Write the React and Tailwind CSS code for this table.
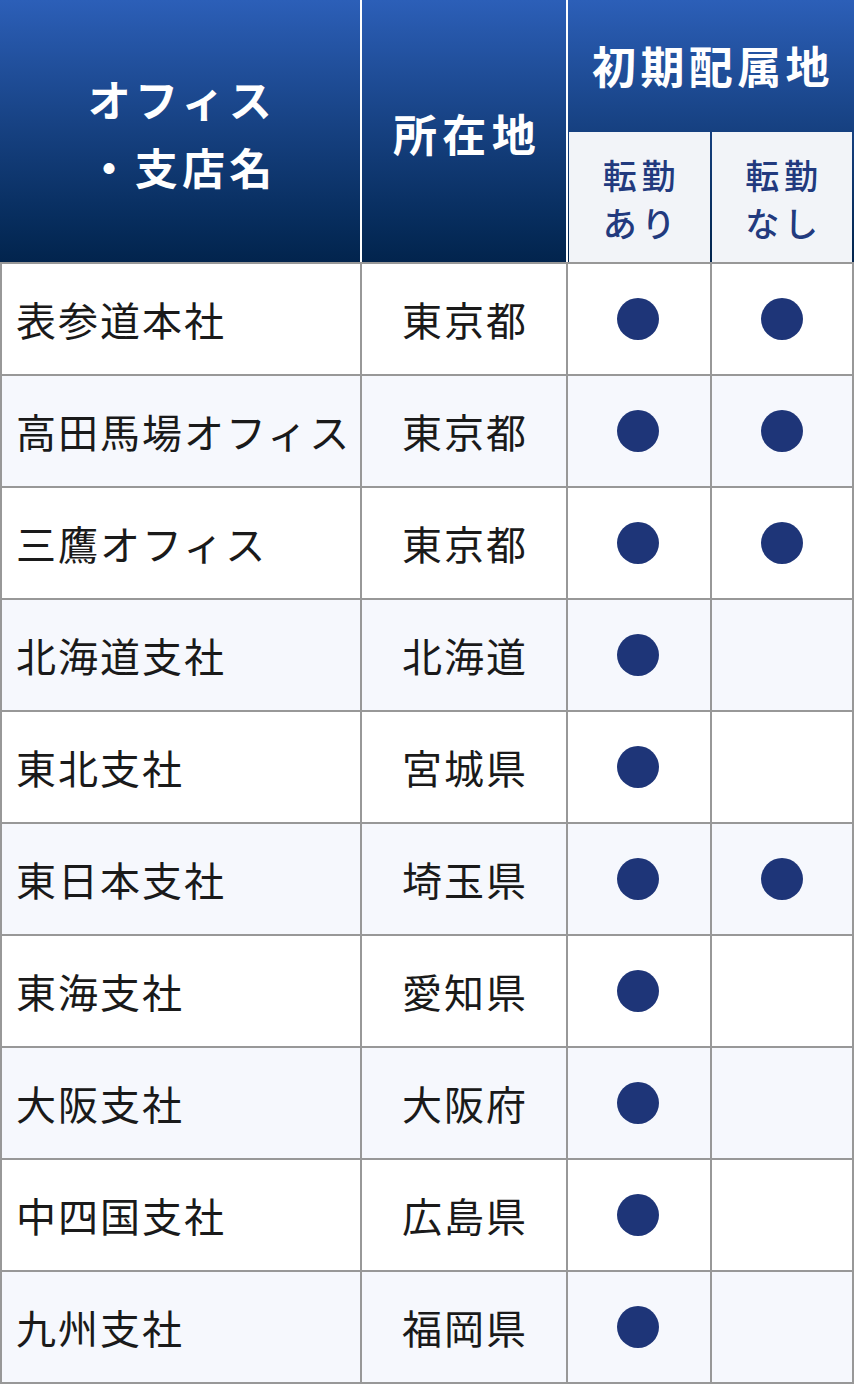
import React from "react";

const rows = [
  ["表参道本社", "東京都", true, true],
  ["高田馬場オフィス", "東京都", true, true],
  ["三鷹オフィス", "東京都", true, true],
  ["北海道支社", "北海道", true, false],
  ["東北支社", "宮城県", true, false],
  ["東日本支社", "埼玉県", true, true],
  ["東海支社", "愛知県", true, false],
  ["大阪支社", "大阪府", true, false],
  ["中四国支社", "広島県", true, false],
  ["九州支社", "福岡県", true, false],
];

const font = { fontFamily: '"Noto Sans CJK JP", "Noto Sans", sans-serif' };

function Dot() {
  return <div className="w-[42px] h-[42px] rounded-full bg-[#1e3578]" />;
}

export default function App() {
  return (
    <div className="w-[854px] bg-white" style={font}>
      {/* Header */}
      <div className="flex h-[262px] bg-gradient-to-b from-[#2c5fb8] to-[#02244d] text-white font-bold">
        <div className="w-[360px] flex items-center justify-center text-center text-[43px] leading-[68px] tracking-[0.1em] pl-[4px] pt-[2px]">
          <div>
            オフィス
            <br />
            ・支店名
          </div>
        </div>
        <div className="w-[206px] border-l-2 border-white flex items-center justify-center text-[44px] tracking-[0.12em] pt-[4px] pl-[6px]">
          所在地
        </div>
        <div className="flex-1 border-l-2 border-white flex flex-col">
          <div className="h-[132px] flex items-center justify-center text-[44px] tracking-[0.1em] pb-[2px] pl-[4px]">
            初期配属地
          </div>
          <div className="flex-1 flex pl-[1px]">
            <div className="w-[141px] bg-[#f2f4f8] flex items-center justify-center text-center text-[#223a7e] text-[34px] leading-[48px] tracking-[0.14em] font-medium pt-[4px] pl-[4px]">
              <div>
                転勤
                <br />
                あり
              </div>
            </div>
            <div className="w-[140px] ml-[2px] bg-[#f2f4f8] flex items-center justify-center text-center text-[#223a7e] text-[34px] leading-[48px] tracking-[0.14em] font-medium pt-[4px] pl-[4px]">
              <div>
                転勤
                <br />
                なし
              </div>
            </div>
          </div>
        </div>
      </div>
      {/* Body */}
      <div className="border-l-2 border-r-2 border-t-2 border-[#989898]">
        {rows.map(([name, pref, a, b], i) => (
          <div
            key={i}
            className={`flex h-[112px] border-b-2 border-[#989898] text-[40px] text-[#1a1a1a] tracking-[0.05em] ${
              i % 2 === 1 ? "bg-[#f6f8fd]" : "bg-white"
            }`}
          >
            <div className="w-[358px] flex items-center pl-[14px] whitespace-nowrap">
              {name}
            </div>
            <div className="w-[206px] border-l-2 border-[#989898] flex items-center justify-center pl-[2px]">
              {pref}
            </div>
            <div className="w-[144px] border-l-2 border-[#989898] flex items-center justify-center pr-[2px]">
              {a && <Dot />}
            </div>
            <div className="flex-1 border-l-2 border-[#989898] flex items-center justify-center">
              {b && <Dot />}
            </div>
          </div>
        ))}
      </div>
    </div>
  );
}
